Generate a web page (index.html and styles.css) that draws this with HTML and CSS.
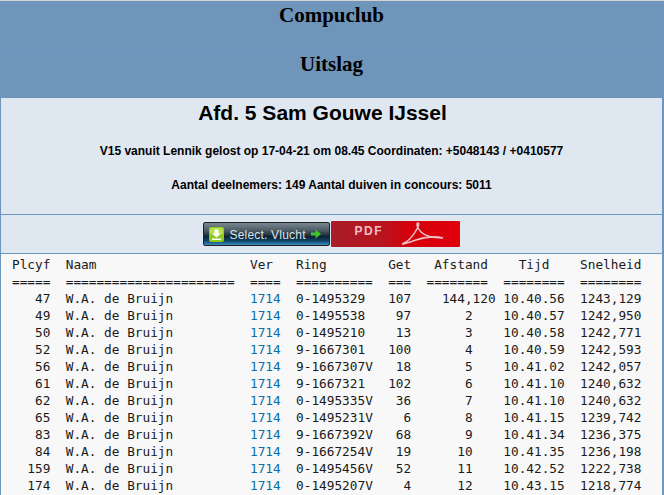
FILE: index.html
```html
<!DOCTYPE html>
<html lang="nl">
<head>
<meta charset="utf-8">
<title>Compuclub Uitslag</title>
<link rel="stylesheet" href="styles.css">
</head>
<body>
<div class="frame">
  <header class="banner">
    <h1 class="banner-title">Compuclub</h1>
    <h1 class="banner-title banner-second">Uitslag</h1>
  </header>
  <section class="info">
    <h2 class="info-title">Afd. 5 Sam Gouwe IJssel</h2>
    <p class="info-line">V15 vanuit Lennik gelost op 17-04-21 om 08.45 Coordinaten: +5048143 / +0410577</p>
    <p class="info-line info-second">Aantal deelnemers: 149 Aantal duiven in concours: 5011</p>
  </section>
  <nav class="actions">
    <a class="btn-select" href="#">
      <svg class="btn-icon" width="15" height="15" viewBox="0 0 15 15"><rect width="15" height="15" rx="2" fill="#8fcb1e"/><rect x="1" y="1" width="13" height="6" rx="1" fill="#b5e04a"/><path d="M5.500 2.500h4v4h2.500l-4.500 4-4.500-4h2.500z" fill="#fff"/><rect x="3" y="11.500" width="9" height="1.500" fill="#fff"/></svg>
      <span class="btn-label">Select. Vlucht</span>
      <svg class="btn-arrow" width="10" height="10" viewBox="0 0 10 10"><path d="M0 3.500h4.500V0.500L10 5 4.500 9.500v-3H0z" fill="#3fc52a"/></svg>
    </a>
    <a class="btn-pdf" href="#">
      <span class="pdf-label">PDF</span>
      <svg class="pdf-logo" width="44" height="24" viewBox="0 0 44 24"><path d="M2 22C8 20 14 13 18 5c1-3 1-4 0-4-2 0-1 5 3 9 4 4 12 6 22 6-8-2-18-1-27 2-6 2-11 4-14 4z" fill="none" stroke="#f0c0c4" stroke-width="1.500"/></svg>
    </a>
  </nav>
  <main class="results">
<pre class="table">Plcyf  Naam                    Ver   Ring        Get   Afstand    Tijd    Snelheid
=====  ======================  ====  ==========  ===  ========  ========  ========
   47  W.A. de Bruijn          <a class="ver" href="#">1714</a>  0-1495329   107    144,120 10.40.56  1243,129
   49  W.A. de Bruijn          <a class="ver" href="#">1714</a>  0-1495538    97       2    10.40.57  1242,950
   50  W.A. de Bruijn          <a class="ver" href="#">1714</a>  0-1495210    13       3    10.40.58  1242,771
   52  W.A. de Bruijn          <a class="ver" href="#">1714</a>  9-1667301   100       4    10.40.59  1242,593
   56  W.A. de Bruijn          <a class="ver" href="#">1714</a>  9-1667307V   18       5    10.41.02  1242,057
   61  W.A. de Bruijn          <a class="ver" href="#">1714</a>  9-1667321   102       6    10.41.10  1240,632
   62  W.A. de Bruijn          <a class="ver" href="#">1714</a>  0-1495335V   36       7    10.41.10  1240,632
   65  W.A. de Bruijn          <a class="ver" href="#">1714</a>  0-1495231V    6       8    10.41.15  1239,742
   83  W.A. de Bruijn          <a class="ver" href="#">1714</a>  9-1667392V   68       9    10.41.34  1236,375
   84  W.A. de Bruijn          <a class="ver" href="#">1714</a>  9-1667254V   19      10    10.41.35  1236,198
  159  W.A. de Bruijn          <a class="ver" href="#">1714</a>  0-1495456V   52      11    10.42.52  1222,738
  174  W.A. de Bruijn          <a class="ver" href="#">1714</a>  0-1495207V    4      12    10.43.15  1218,774</pre>
  </main>
</div>
</body>
</html>
```
FILE: styles.css
```css
html, body {
  margin: 0;
  padding: 0;
  height: 100%;
  overflow: hidden;
  background: #d4d4d4;
}
body {
  padding-top: 1px;
  box-sizing: border-box;
}
.frame {
  border-left: 1px solid #6e96bc;
  border-right: 2px solid #6e96bc;
  background: #f8f8f8;
  height: 100%;
}
.banner {
  background: #6f95ba;
  height: 97px;
}
.banner-title {
  margin: 0;
  height: 47px;
  box-sizing: border-box;
  padding-top: 2px;
  font: bold 21px/24px "Liberation Serif", serif;
  color: #000;
  text-align: center;
}
.banner-second {
  height: 50px;
  padding-top: 3px;
  border-top: 1px solid #6a97c0;
}
.info {
  background: #dfe7f1;
  height: 117px;
  box-sizing: border-box;
  border-bottom: 1px solid #6a97c0;
  text-align: center;
  color: #000;
  font-family: "Liberation Sans", sans-serif;
}
.info-title {
  margin: 0;
  padding: 3px 18px 0 0;
  font-size: 21px;
  line-height: 24px;
  font-weight: bold;
}
.info-line {
  margin: 19px 0 0;
  font-size: 12px;
  line-height: 14px;
  font-weight: bold;
}
.info-second {
  margin-top: 20px;
}
.actions {
  background: #dfe7f1;
  height: 39px;
  box-sizing: border-box;
  border-bottom: 1px solid #6a97c0;
  display: flex;
  justify-content: center;
  align-items: flex-start;
  padding: 6px 1px 0 0;
  gap: 1px;
}
.btn-select {
  margin-top: 1px;
  width: 127px;
  height: 24px;
  box-sizing: border-box;
  border: 1px solid #222;
  border-radius: 2px;
  background: linear-gradient(#7a8890 0%, #4a5964 35%, #2a3d4a 50%, #0c2233 62%, #12476e 82%, #3a8fc0 100%);
  display: flex;
  align-items: center;
  padding-left: 5px;
  text-decoration: none;
}
.btn-icon {
  flex: none;
}
.btn-label {
  margin: 1px 0 0 6px;
  font: 12px/14px "Liberation Sans", sans-serif;
  letter-spacing: 0.2px;
  color: #d8e4ea;
  white-space: nowrap;
}
.btn-arrow {
  flex: none;
  margin-left: 5px;
}
.btn-pdf {
  width: 129px;
  height: 26px;
  border-radius: 1px;
  background: linear-gradient(90deg, #a81c28 0%, #b8141f 40%, #d4000c 60%, #e0000c 100%);
  display: flex;
  align-items: flex-start;
  text-decoration: none;
  position: relative;
}
.pdf-label {
  margin: 4px 0 0 24px;
  font: bold 12px/12px "Liberation Sans", sans-serif;
  letter-spacing: 1.5px;
  color: #f2c0c4;
}
.pdf-logo {
  position: absolute;
  left: 69px;
  top: 1px;
}
.results {
  padding: 2px 0 0 11px;
}
.table {
  margin: 0;
  font: 12.75px/17px "DejaVu Sans Mono", monospace;
  color: #1a1a1a;
}
.ver {
  color: #0a6ea8;
  text-decoration: none;
}
```
